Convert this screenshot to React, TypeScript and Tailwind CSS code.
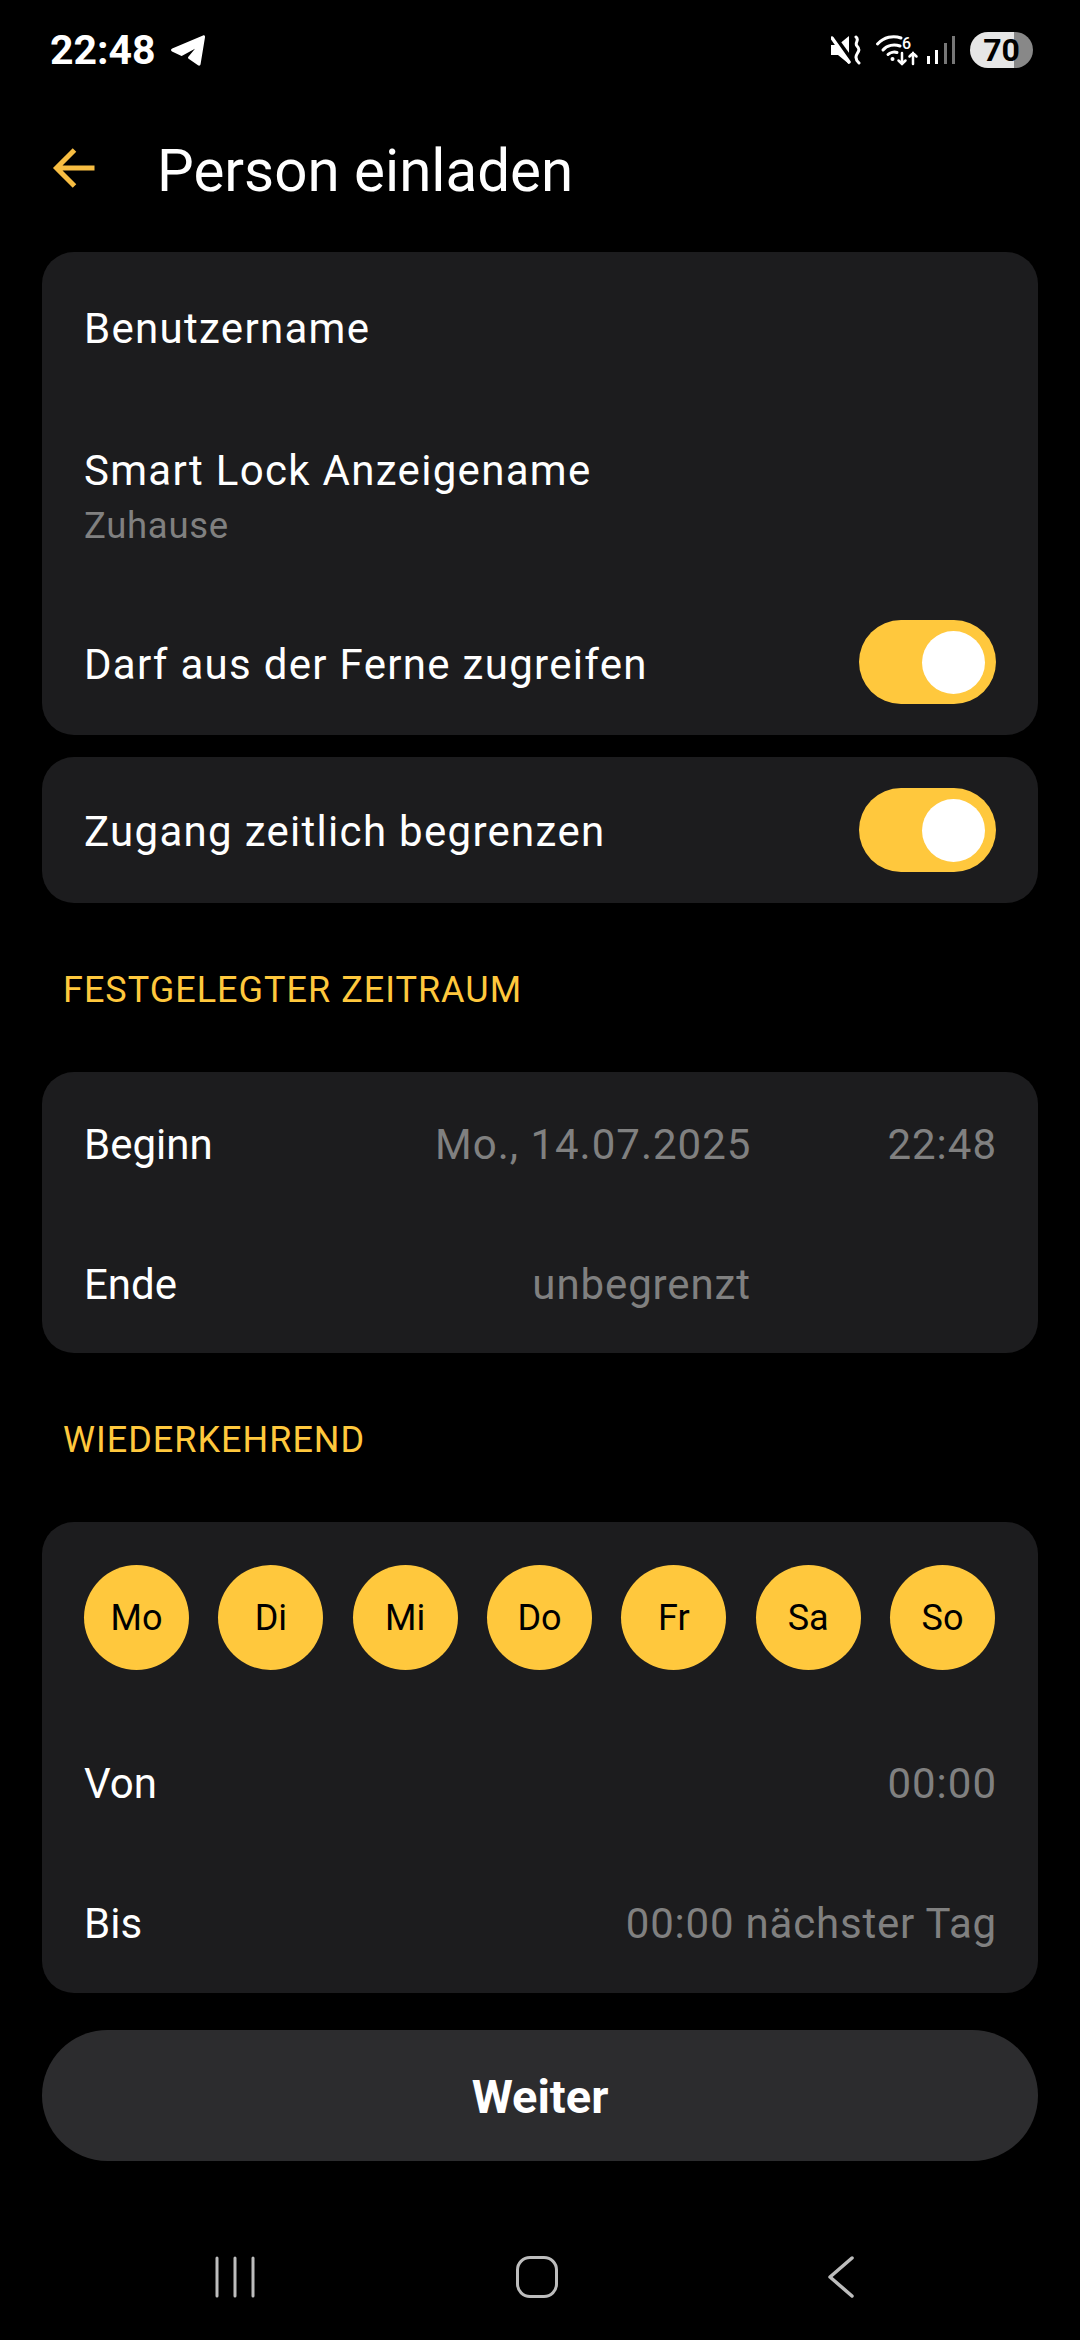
const days = ["Mo", "Di", "Mi", "Do", "Fr", "Sa", "So"];

function Toggle() {
  return (
    <div className="flex h-[84px] w-[137px] shrink-0 items-center justify-end rounded-full bg-[#ffc83d] pr-[11px]">
      <div className="h-[63px] w-[63px] rounded-full bg-white" />
    </div>
  );
}

function SectionLabel({ children }: { children: string }) {
  return (
    <div className="flex h-[169px] items-center pl-[21px] pt-[4px] text-[36px] tracking-[1px] text-[#ffc83d]">
      {children}
    </div>
  );
}

function StatusBar() {
  return (
    <div className="flex h-[100px] items-center justify-between pl-[50px] pr-[47px]">
      <div className="flex items-center gap-[14px]">
        <span className="text-[41px] font-bold leading-none text-white">22:48</span>
        <svg viewBox="0 0 34 31" className="h-[31px] w-[36px]" fill="white">
          <path d="M32 .5c1.3-.5 2.2.4 2 1.7l-4.400 26.900c-.2 1.400-1.400 2-2.600 1.200l-9.400-6.600c-.7-.5-.8-1.300-.2-1.900L24 13.700 11.600 20.600c-.7.4-1.400.4-2.100 0L1 16.400c-1.400-.7-1.300-2.300.2-2.900z" />
        </svg>
      </div>
      <div className="flex items-center">
        <svg viewBox="0 0 30 30" className="h-[30px] w-[30px]" fill="none">
          <path d="M0 10h7l11-9v28L7 20H0z" fill="white" />
          <path d="M2 1l19 26" stroke="black" strokeWidth="6" />
          <path d="M1 3l17 24" stroke="white" strokeWidth="3.500" strokeLinecap="round" />
          <path d="M25 2c4 3-2 6 1 9s2 5 0 8-1 6 2 9" stroke="white" strokeWidth="3" strokeLinecap="round" />
        </svg>
        <svg viewBox="0 0 42 32" className="ml-[15px] h-[32px] w-[42px] overflow-visible" fill="none" stroke="white" strokeLinecap="round">
          <path d="M1.500 10C8 3 17 1 25 4" strokeWidth="3" />
          <path d="M7 16c4-5 11-6 17-4" strokeWidth="3" />
          <path d="M12 20.500c2-2 6-3 9-2" strokeWidth="3" />
          <circle cx="16.500" cy="25" r="2" fill="white" stroke="none" />
          <path d="M26 19v11m-3.500-3.500L26 30l3.500-3.500" strokeWidth="2.500" />
          <path d="M37 30V19m-3.500 3.500L37 19l3.500 3.500" strokeWidth="2.500" />
          <text x="26" y="15" fontSize="16" fontWeight="500" fill="white" stroke="none" fontFamily="Roboto, sans-serif">6</text>
        </svg>
        <svg viewBox="0 0 28 28" className="ml-[9px] h-[28px] w-[28px]">
          <rect x="0" y="20" width="3" height="8" fill="white" />
          <rect x="8" y="14" width="3" height="14" fill="white" />
          <rect x="17" y="7" width="3" height="21" fill="#777777" />
          <rect x="25" y="0" width="3" height="28" fill="#777777" />
        </svg>
        <div className="ml-[15px] flex h-[36px] w-[63px] items-center justify-center rounded-full bg-[linear-gradient(90deg,#e6e6e6_0,#e6e6e6_70%,#888888_70%,#888888_100%)] text-[32px] font-bold leading-none text-black">
          70
        </div>
      </div>
    </div>
  );
}

function NavBar() {
  return (
    <div className="mt-[95px] flex h-[42px] items-center pl-[215px]">
      <svg viewBox="0 0 40 42" className="h-[42px] w-[40px]" stroke="#bdbdbd" strokeWidth="3" strokeLinecap="round">
        <path d="M2 2v38M20 2v38M38 2v38" />
      </svg>
      <div className="ml-[261px] h-[42px] w-[42px] rounded-[14px] border-[3.500px] border-[#bdbdbd]" />
      <svg viewBox="0 0 28 42" className="ml-[269px] h-[42px] w-[28px]" fill="none" stroke="#bdbdbd" strokeWidth="3.500" strokeLinecap="round" strokeLinejoin="round">
        <path d="M25 2L3 21l22 19" />
      </svg>
    </div>
  );
}

export default function App() {
  return (
    <div className="h-[2340px] w-[1080px] overflow-hidden bg-black font-['Roboto',sans-serif] text-white">
      <StatusBar />
      <div className="flex h-[152px] items-center pb-[16px] pl-[52px]">
        <svg viewBox="0 0 42 42" className="h-[42px] w-[43px]" fill="none" stroke="#f7bd42" strokeWidth="5" strokeLinejoin="miter">
          <path d="M42 21H5M22 3L4 21l18 18" />
        </svg>
        <h1 className="ml-[62px] mt-[6px] text-[58.300px] font-normal leading-none">Person einladen</h1>
      </div>

      <div className="px-[42px]">
        <div className="rounded-[32px] bg-[#1c1c1e] pl-[42px] pr-[42px] text-[42px] tracking-[1.300px]">
          <div className="flex h-[152px] items-center">Benutzername</div>
          <div className="flex h-[189px] flex-col justify-center pb-[4px]">
            <span className="leading-[52px]">Smart Lock Anzeigename</span>
            <span className="mt-[6px] text-[36.500px] leading-[45px] tracking-[0.7px] text-[#808080]">Zuhause</span>
          </div>
          <div className="flex h-[142px] items-center justify-between pb-[4px]">
            <span className="mt-[4px]">Darf aus der Ferne zugreifen</span>
            <Toggle />
          </div>
        </div>

        <div className="mt-[22px] flex h-[146px] items-center justify-between rounded-[32px] bg-[#1c1c1e] px-[42px] text-[42px] tracking-[1.300px]">
          <span className="mt-[2px]">Zugang zeitlich begrenzen</span>
          <Toggle />
        </div>

        <SectionLabel>FESTGELEGTER ZEITRAUM</SectionLabel>

        <div className="rounded-[32px] bg-[#1c1c1e] pl-[42px] pr-[41px] text-[42px]">
          <div className="flex h-[144px] items-center">
            <span>Beginn</span>
            <span className="ml-auto tracking-[1px] text-[#808080]">Mo., 14.07.2025</span>
            <span className="ml-[136px] tracking-[1px] text-[#808080]">22:48</span>
          </div>
          <div className="flex h-[137px] items-center">
            <span>Ende</span>
            <span className="ml-auto mr-[246px] tracking-[0.900px] text-[#808080]">unbegrenzt</span>
          </div>
        </div>

        <SectionLabel>WIEDERKEHREND</SectionLabel>

        <div className="rounded-[32px] bg-[#1c1c1e] pl-[42px] pr-[41px] pt-[43px] text-[42px]">
          <div className="flex justify-between pr-[2px]">
            {days.map((day) => (
              <div key={day} className="flex h-[105px] w-[105px] items-center justify-center rounded-full bg-[#ffc83d] text-[36px] text-black">
                {day}
              </div>
            ))}
          </div>
          <div className="mt-[42px] flex h-[142px] items-center justify-between">
            <span>Von</span>
            <span className="tracking-[1px] text-[#808080]">00:00</span>
          </div>
          <div className="flex h-[139px] items-center justify-between">
            <span>Bis</span>
            <span className="tracking-[0.800px] text-[#808080]">00:00 nächster Tag</span>
          </div>
        </div>

        <div className="mt-[37px] flex h-[131px] items-center justify-center rounded-full bg-[#2c2c2e] pt-[4px] text-[47px] font-bold">
          Weiter
        </div>
      </div>

      <NavBar />
    </div>
  );
}
